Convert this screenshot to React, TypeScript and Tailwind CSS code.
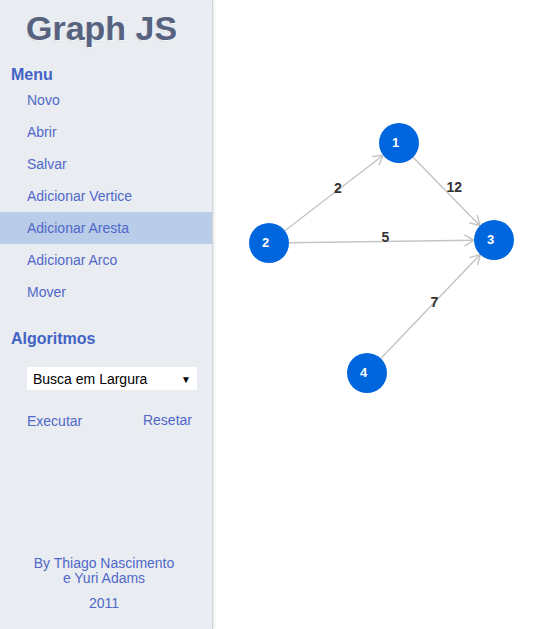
import React from "react";

type Node = { id: string; x: number; y: number };

const OFF = 213;
const nodes: Record<string, Node> = {
  "1": { id: "1", x: 399 - OFF, y: 143 },
  "2": { id: "2", x: 269 - OFF, y: 243 },
  "3": { id: "3", x: 494 - OFF, y: 240 },
  "4": { id: "4", x: 367 - OFF, y: 373 },
};

const edges: { from: string; to: string; w: string }[] = [
  { from: "2", to: "1", w: "2" },
  { from: "1", to: "3", w: "12" },
  { from: "2", to: "3", w: "5" },
  { from: "4", to: "3", w: "7" },
];

const R = 20;

function Edge({ from, to, w }: { from: Node; to: Node; w: string }) {
  const dx = to.x - from.x;
  const dy = to.y - from.y;
  const len = Math.sqrt(dx * dx + dy * dy);
  const ux = dx / len;
  const uy = dy / len;
  const sx = from.x + ux * R;
  const sy = from.y + uy * R;
  const ex = to.x - ux * R;
  const ey = to.y - uy * R;
  const a = Math.atan2(dy, dx);
  const al = 11;
  const sp = Math.PI / 6;
  const p1x = ex - al * Math.cos(a - sp);
  const p1y = ey - al * Math.sin(a - sp);
  const p2x = ex - al * Math.cos(a + sp);
  const p2y = ey - al * Math.sin(a + sp);
  const mx = (from.x + to.x) / 2;
  const my = (from.y + to.y) / 2;
  return (
    <g>
      <line x1={sx} y1={sy} x2={ex} y2={ey} stroke="#c4c4c4" strokeWidth={1.4} />
      <polyline
        points={`${p1x},${p1y} ${ex},${ey} ${p2x},${p2y}`}
        fill="none"
        stroke="#c4c4c4"
        strokeWidth={1.4}
      />
      <text
        x={mx}
        y={my}
        fontFamily="'Liberation Sans', Arial, sans-serif"
        fontWeight="bold"
        fontSize={14}
        fill="#333333"
      >
        {w}
      </text>
    </g>
  );
}

const menuItems = [
  "Novo",
  "Abrir",
  "Salvar",
  "Adicionar Vertice",
  "Adicionar Aresta",
  "Adicionar Arco",
  "Mover",
];

export default function App() {
  return (
    <div
      className="flex h-[629px] w-[534px] overflow-hidden bg-white"
      style={{ fontFamily: "'Liberation Sans', Arial, sans-serif" }}
    >
      <aside className="relative flex h-full w-[213px] shrink-0 flex-col border-r border-[#d3d6db] bg-[#e9ecf1] shadow-[1px_0_3px_rgba(0,0,0,0.12)]">
        <h1 className="mt-[8px] h-[40px] pl-[26px] text-[34px] font-bold leading-[40px] text-[#56627f] [text-shadow:1px_1px_1px_rgba(255,255,255,0.9),0_1px_2px_rgba(0,0,0,0.15)]">
          Graph JS
        </h1>
        <div className="mt-[16px] h-[20px] pl-[11px] text-[16px] font-bold leading-[22px] text-[#4263c6]">
          Menu
        </div>
        <ul className="flex flex-col">
          {menuItems.map((m) => (
            <li
              key={m}
              className={
                m === "Adicionar Aresta"
                  ? "h-[32px] bg-[#b9cce8] pl-[27px] text-[14px] leading-[32px] text-[#5068c9]"
                  : "h-[32px] pl-[27px] text-[14px] leading-[32px] text-[#5068c9]"
              }
            >
              {m}
            </li>
          ))}
        </ul>
        <div className="mt-[20px] h-[20px] pl-[11px] text-[16px] font-bold leading-[22px] text-[#4263c6]">
          Algoritmos
        </div>
        <div className="ml-[27px] mt-[19px] flex h-[23px] w-[170px] items-center justify-between bg-white pl-[6px] pr-[6px] pt-[1px] text-[14px] text-black">
          <span>Busca em Largura</span>
          <span className="text-[10px]">▼</span>
        </div>
        <div className="ml-[27px] mt-[21px] flex h-[20px] w-[165px] items-center justify-between text-[14px] text-[#5068c9]">
          <span>Executar</span>
          <span className="-mt-[2px]">Resetar</span>
        </div>
        <div className="mt-auto flex flex-col items-center pb-[18px] pr-[4px] text-[14px] leading-[15px] text-[#5068c9]">
          <span>By Thiago Nascimento</span>
          <span>e Yuri Adams</span>
          <span className="mt-[10px]">2011</span>
        </div>
      </aside>
      <main className="relative h-full flex-1">
        <svg width="321" height="629" className="block">
          {edges.map((e) => (
            <Edge key={e.from + e.to} from={nodes[e.from]} to={nodes[e.to]} w={e.w} />
          ))}
          {Object.values(nodes).map((n) => (
            <g key={n.id}>
              <circle cx={n.x} cy={n.y} r={R} fill="#0066dd" />
              <text
                x={n.x - 7}
                y={n.y + 4}
                fontFamily="'Liberation Sans', Arial, sans-serif"
                fontWeight="bold"
                fontSize={13}
                fill="#ffffff"
              >
                {n.id}
              </text>
            </g>
          ))}
        </svg>
      </main>
    </div>
  );
}
